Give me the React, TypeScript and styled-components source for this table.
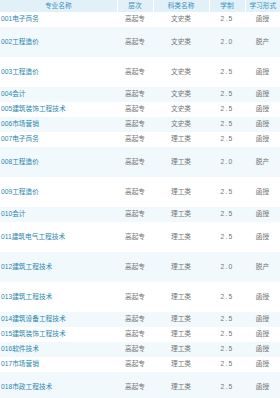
import React from "react";
import styled, { createGlobalStyle } from "styled-components";

interface MajorRow {
  name: string;
  level: string;
  category: string;
  years: string;
  mode: string;
  tall?: boolean;
}

const rows: MajorRow[] = [
  { name: "001电子商务", level: "高起专", category: "文史类", years: "2.5", mode: "函授" },
  { name: "002工程造价", level: "高起专", category: "文史类", years: "2.0", mode: "脱产", tall: true },
  { name: "003工程造价", level: "高起专", category: "文史类", years: "2.5", mode: "函授", tall: true },
  { name: "004会计", level: "高起专", category: "文史类", years: "2.5", mode: "函授" },
  { name: "005建筑装饰工程技术", level: "高起专", category: "文史类", years: "2.5", mode: "函授" },
  { name: "006市场营销", level: "高起专", category: "文史类", years: "2.5", mode: "函授" },
  { name: "007电子商务", level: "高起专", category: "理工类", years: "2.5", mode: "函授" },
  { name: "008工程造价", level: "高起专", category: "理工类", years: "2.0", mode: "脱产", tall: true },
  { name: "009工程造价", level: "高起专", category: "理工类", years: "2.5", mode: "函授", tall: true },
  { name: "010会计", level: "高起专", category: "理工类", years: "2.5", mode: "函授" },
  { name: "011建筑电气工程技术", level: "高起专", category: "理工类", years: "2.5", mode: "函授", tall: true },
  { name: "012建筑工程技术", level: "高起专", category: "理工类", years: "2.0", mode: "脱产", tall: true },
  { name: "013建筑工程技术", level: "高起专", category: "理工类", years: "2.5", mode: "函授", tall: true },
  { name: "014建筑设备工程技术", level: "高起专", category: "理工类", years: "2.5", mode: "函授" },
  { name: "015建筑装饰工程技术", level: "高起专", category: "理工类", years: "2.5", mode: "函授" },
  { name: "016软件技术", level: "高起专", category: "理工类", years: "2.5", mode: "函授" },
  { name: "017市场营销", level: "高起专", category: "理工类", years: "2.5", mode: "函授" },
  { name: "018市政工程技术", level: "高起专", category: "理工类", years: "2.5", mode: "函授", tall: true },
];

const GlobalStyle = createGlobalStyle`
  html, body {
    margin: 0;
    padding: 0;
    background: #ffffff;
  }
  body {
    font-family: "Liberation Sans", "Noto Sans CJK SC", sans-serif;
    overflow: hidden;
  }
`;

const Table = styled.table`
  width: 280px;
  table-layout: fixed;
  border-collapse: collapse;
  font-size: 6.7px;
  line-height: 1;
`;

const HeadCell = styled.th`
  height: 12px;
  padding: 0;
  background: #e2f1f8;
  color: #3590c0;
  font-weight: normal;
  text-align: center;
  border-left: 1px solid #ffffff;
  &:first-child {
    border-left: none;
  }
`;

const Row = styled.tr<{ $tall?: boolean; $striped?: boolean }>`
  height: ${({ $tall }) => ($tall ? "30px" : "15px")};
  background: ${({ $striped }) => ($striped ? "#f1f9fd" : "#ffffff")};
`;

const NameCell = styled.td`
  padding: 0 0 0 1px;
  color: #2a86ab;
  white-space: nowrap;
  overflow: hidden;
`;

const Cell = styled.td<{ $spaced?: boolean }>`
  padding: 0;
  color: #747474;
  text-align: center;
  letter-spacing: ${({ $spaced }) => ($spaced ? "1.2px" : "0")};
`;

const App: React.FC = () => {
  return (
    <>
      <GlobalStyle />
      <Table>
        <colgroup>
          <col style={{ width: 117 }} />
          <col style={{ width: 36 }} />
          <col style={{ width: 56 }} />
          <col style={{ width: 36 }} />
          <col style={{ width: 35 }} />
        </colgroup>
        <thead>
          <tr>
            <HeadCell>专业名称</HeadCell>
            <HeadCell>层次</HeadCell>
            <HeadCell>科类名称</HeadCell>
            <HeadCell>学制</HeadCell>
            <HeadCell>学习形式</HeadCell>
          </tr>
        </thead>
        <tbody>
          {rows.map((row, i) => (
            <Row key={row.name} $tall={row.tall} $striped={i % 2 === 1}>
              <NameCell>{row.name}</NameCell>
              <Cell>{row.level}</Cell>
              <Cell>{row.category}</Cell>
              <Cell $spaced>{row.years}</Cell>
              <Cell>{row.mode}</Cell>
            </Row>
          ))}
        </tbody>
      </Table>
    </>
  );
};

export default App;
